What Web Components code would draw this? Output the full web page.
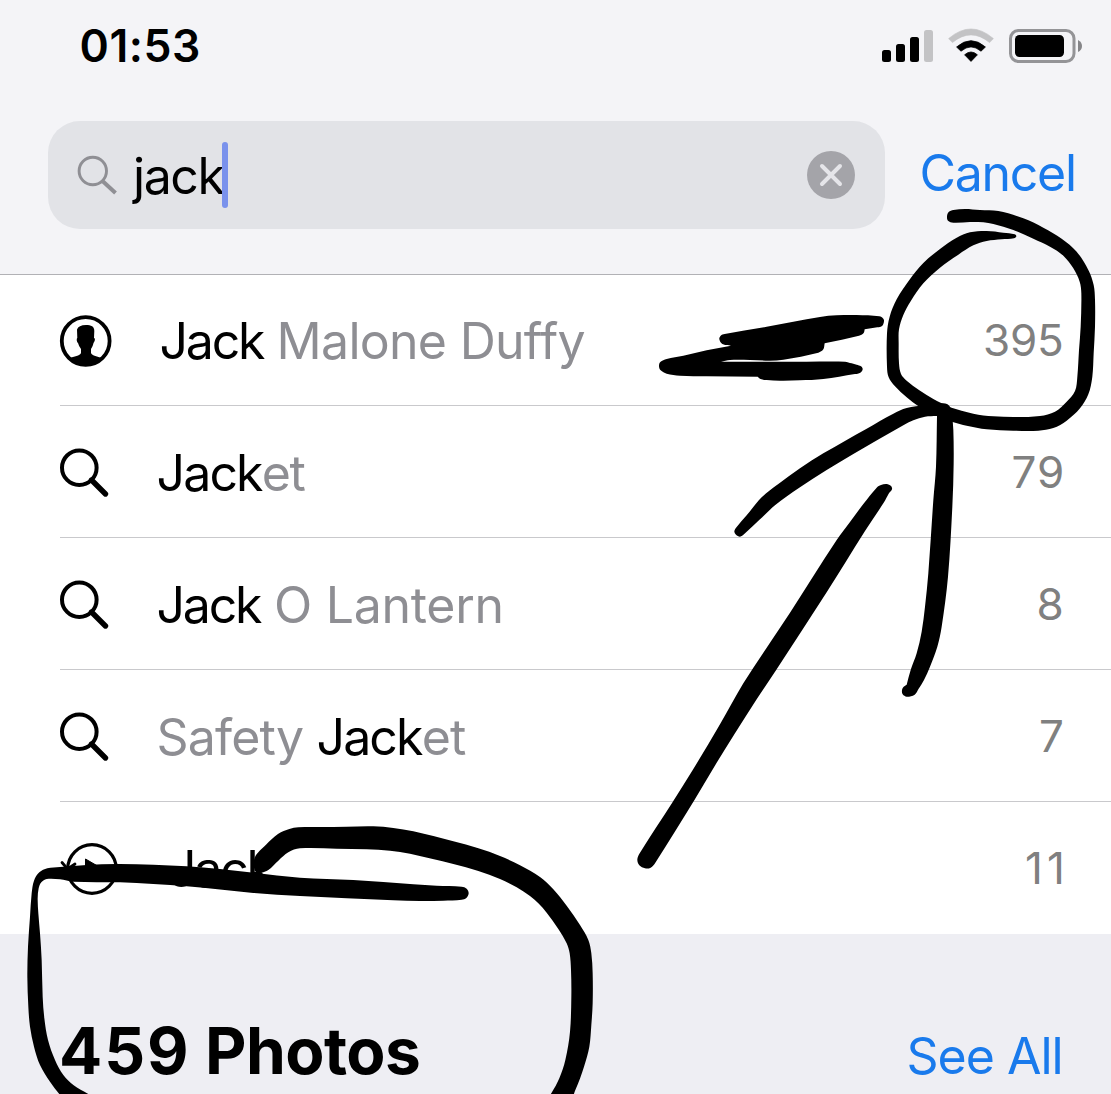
<!DOCTYPE html>
<html lang="en">
<head>
<meta charset="utf-8">
<title>Photo search</title>
<style>
html,body{margin:0;padding:0}
body{font-family:Inter,"Liberation Sans",sans-serif;background:#fff;width:1111px;height:1094px;overflow:hidden}
</style>
</head>
<body>
<photo-search></photo-search>
<script>
const define = (name, html, setup) => {
  const t = document.createElement('template');
  t.innerHTML = html;
  customElements.define(name, class extends HTMLElement {
    constructor() {
      super();
      this.attachShadow({mode: 'open'}).append(t.content.cloneNode(true));
    }
    connectedCallback() { if (setup) setup(this, this.shadowRoot); }
  });
};

/* A line of text whose drawn width equals its w attribute.
   A <b w> inside it is fitted to its own width first. */
const ctx = document.createElement('canvas').getContext('2d');
define('fit-text', `<style>:host{display:block;white-space:pre;flex:none;line-height:60px}span{display:inline-block;vertical-align:top}</style><span><slot></slot></span>`,
  (el, root) => {
    const cs = getComputedStyle(el), text = el.textContent;
    const bearings = s => {
      ctx.font = `${cs.fontWeight} ${cs.fontSize} Inter, sans-serif`;
      const m = ctx.measureText(s);
      return [-m.actualBoundingBoxLeft, m.width - m.actualBoundingBoxRight];
    };
    const span = root.querySelector('span'), b = el.querySelector('b[w]');
    let loose = text.length - 1;
    if (b) {
      const s = b.textContent, [l, r] = bearings(s);
      b.style.letterSpacing = (+b.getAttribute('w') + l + r - b.getBoundingClientRect().width) / (s.length - 1) + 'px';
      loose -= s.length;
    }
    const w = +el.getAttribute('w'), [left, right] = bearings(text);
    const ink = span.getBoundingClientRect().width - left - right;
    el.style.width = w + 'px';
    span.style.marginLeft = -left + 'px';
    if (loose > 0) span.style.letterSpacing = (w - ink) / loose + 'px';
  });

define('status-bar', `<style>
:host{display:flex;align-items:center;height:92px;padding:0 28px 0 81.500px;box-sizing:border-box}
fit-text{font-size:44.5px;font-weight:600;margin-right:auto}
svg{display:block}
</style>
<fit-text w="117.500">01:53</fit-text>
<svg width="204" height="40" viewBox="879 26 204 40">
<rect x="882" y="50" width="9" height="12" rx="2.5"/><rect x="896" y="44" width="9" height="18" rx="2.5"/><rect x="910" y="37" width="9" height="25" rx="2.5"/><rect x="924" y="30" width="9" height="32" rx="2.5" fill="#c3c3c5"/>
<path d="M948.6 38.6Q971 19.3 993.4 38.6L989.6 42.6Q971 27.2 952.4 42.6Z" fill="#c3c3c5" stroke="#c3c3c5" stroke-width=".6" stroke-linejoin="round"/>
<path d="M956.6 47Q971 34.3 985.4 47L981 51.2Q971 42.6 961 51.2Z" stroke="#000" stroke-width=".8" stroke-linejoin="round"/>
<path d="M964.6 54.8Q971 49.2 977.4 54.8L971 61.4Z" stroke="#000" stroke-width=".8" stroke-linejoin="round"/>
<rect x="1010.5" y="30.5" width="63.500" height="31" rx="8" fill="none" stroke="#949497" stroke-width="3"/>
<rect x="1015" y="35" width="49" height="22" rx="4.500"/>
<path d="M1078 40Q1082 42 1082 46T1078 52Z" fill="#858588"/>
</svg>`);

define('search-field', `<style>
:host{display:flex;align-items:center;width:837px;height:108px;border-radius:32px;background:#e2e3e7;box-sizing:border-box;padding:0 30px 0 29px}
fit-text{font-size:50px;margin:2px 0 0 14px}
i{width:6px;height:66px;border-radius:3px;background:#7a92ec;margin-left:-2.500px}
.clear{margin-left:auto}
svg{display:block}
</style>
<svg width="41" height="44" viewBox="77 153 41 44" fill="none" stroke="#8f8f94"><circle cx="92.800" cy="171" r="13.700" stroke-width="2.900"/><path d="M102.500 181L115.500 193" stroke-width="4"/></svg>
<fit-text w="92.500">jack</fit-text><i></i>
<svg class="clear" width="48" height="48" viewBox="0 0 48 48"><circle cx="24" cy="24" r="24" fill="#a4a4a9"/><path d="M15 15L33 33M33 15L15 33" stroke="#e5e5e9" stroke-width="4" stroke-linecap="round"/></svg>`);

define('search-header', `<style>
:host{display:flex;flex-direction:column;height:275px;box-sizing:border-box;background:#f4f4f7;border-bottom:1px solid #b1b1b5}
div{display:flex;align-items:center;margin-top:29px;padding:0 37px 0 48px;justify-content:space-between}
div>fit-text{font-size:50px;color:#197aec;margin-top:-5px}
</style>
<status-bar></status-bar>
<div><search-field></search-field><fit-text w="152.500">Cancel</fit-text></div>`);

const icons = {
  search: '<circle cx="19.300" cy="23.700" r="17.300" fill="none" stroke="#000" stroke-width="4"/><path d="M31.500 36L45.500 50" stroke="#000" stroke-width="5.400" stroke-linecap="round"/>',
  person: '<circle cx="25.700" cy="29" r="23.900" fill="none" stroke="#000" stroke-width="3.800"/><path d="M17 17.500C18 14.500 21 13 26 13C31 13 34.500 14.500 34.300 19L34 26C35.500 26 35 29.500 33.500 31C33 34 31.500 36 31 37V41C32 44 38 44.500 41.500 46C37 52 32 54 25.700 54S14 52 9.500 46C14 44.500 20 44 21 41V37C19.500 35 18.500 33 18 31C16.500 30 16.500 26.500 17.300 26Z"/>',
  play: '<circle cx="32" cy="29" r="24.300" fill="none" stroke="#000" stroke-width="3.200"/><path d="M25.500 19L41 28L25.500 37Z" stroke="#000" stroke-linejoin="round"/><path d="M2 22.500L7.500 29L15 24" fill="none" stroke="#000" stroke-width="2.800" stroke-linecap="round"/>'
};
define('result-row', `<style>
:host{display:flex;align-items:center;height:132px;margin-left:60px;padding-right:49px;box-sizing:border-box;border-bottom:1px solid #c9c9cc}
:host([first]){height:131px}
:host([last]){border:0}
svg{display:block;flex:none;overflow:visible;margin-top:-2px}
.name{font-size:50px;color:#8e8e93;flex:1;padding-top:2.500px}
.count{font-size:44px;color:#808080}
</style>
<svg width="60" height="54"></svg>
<div class="name"><slot></slot></div>
<div class="count"><slot name="count"></slot></div>`,
  (el, root) => {
    const svg = root.querySelector('svg');
    svg.innerHTML = icons[el.getAttribute('icon')];
    root.querySelector('.name').style.paddingLeft = el.getAttribute('indent') - 60 + 'px';
  });

define('photos-heading', `<style>
:host{display:flex;align-items:flex-end;justify-content:space-between;height:160px;box-sizing:border-box;background:#eeeef3;padding:0 50.500px 0 62px}
fit-text{line-height:80px}
b{font-weight:inherit}
.title{font-size:64px;font-weight:700;margin-bottom:3px}
.all{font-size:50px;color:#197aec;margin-bottom:-2px}
</style>
<fit-text class="title" w="357"><b w="124">459</b> Photos</fit-text><fit-text class="all" w="152">See All</fit-text>`);

/* Pen strokes: outline points in thirds of a pixel from an origin, joined by a smooth closed curve.
   A point given twice is a sharp corner. */
const strokes = [
  [640, 200, `940 30 975 27 1020 30 1075 33 1150 55 1210 83 1265 116 1310 155 1345 210 1361 255 1365 300 1365 380 1361 460 1357 530 1345 583 1320 625 1280 662 1240 684 1195 692 1120 692 1040 688 980 677 938 666 890 645 838 620 800 592 765 559 746 532 741 500 741 400 749 350 770 298 808 240 850 189 900 147 950 113 990 97 1040 93 1090 98 1124 103 1129 109 1122 115 1085 118 1040 123 1000 136 955 164 900 203 850 250 812 304 790 345 777 388 776 430 777 490 783 522 800 542 838 571 880 597 905 610 930 622 1000 641 1060 649 1130 651 1200 648 1245 635 1280 605 1305 573 1312 530 1317 450 1322 380 1324 280 1319 245 1300 205 1270 167 1230 140 1180 116 1120 90 1060 72 1030 67 990 66 940 68 924 62 921 49 926 36`],
  [640, 200, `254 402 380 380 540 351 590 346 650 345 718 349 730 356 732 364 727 377 712 382 674 388 674 388 671 399 657 407 554 430 554 430 550 448 535 458 430 479 390 482 330 480 270 480 243 485 243 485 300 485 500 485 615 485 635 490 650 494 663 499 668 508 661 518 645 522 550 537 480 541 420 542 380 540 362 537 353 530 353 530 200 529 120 527 80 521 62 511 57 499 61 486 80 477 130 467 200 451 273 437 273 437 247 432 238 418 242 407`],
  [620, 390, `965 40 981 42 992 54 996 75 1000 120 1001 220 997 350 984 560 965 710 952 770 930 830 912 870 895 898 884 914 860 920 848 913 846 900 851 890 860 884 860 884 872 840 890 790 905 725 915 650 925 550 940 330 948 230 951 78 951 78 915 80 880 91 850 106 700 192 620 240 540 292 465 346 420 388 372 433 360 440 348 434 343 424 350 411 380 376 425 322 475 282 540 235 610 190 740 116 820 71 860 54 915 46`],
  [620, 390, `770 293 783 285 800 282 813 288 816 298 806 311 792 337 735 423 620 607 470 838 410 928 345 1030 290 1118 222 1232 106 1418 92 1433 75 1435 58 1426 52 1408 60 1388 158 1236 220 1137 300 1003 370 880 450 758 510 668 650 450 690 396 730 342`],
  [20, 810, `1325 230 1340 236 1346 250 1339 264 1325 269 1270 272 1200 273 1120 271 840 258 700 249 500 229 400 222 300 217 160 215 120 208 80 207 64 217 56 235 53 265 55 310 60 370 65 450 68 560 73 625 84 690 105 750 130 795 160 825 208 854 280 900 190 920 125 860 90 815 60 765 42 710 30 650 25 590 22 500 24 410 30 320 35 250 42 212 58 187 82 175 120 171 200 165 290 162 400 164 500 169 600 177 840 203 1000 210 1180 223 1250 227`],
  [20, 810, `704 143 738 104 775 71 808 57 835 52 900 51 980 50 1060 49 1120 54 1180 64 1300 94 1375 115 1440 138 1500 166 1560 201 1600 238 1640 287 1680 345 1705 390 1714 430 1718 490 1718 580 1714 645 1708 710 1692 770 1667 838 1630 910 1560 900 1594 850 1618 805 1636 750 1650 665 1654 560 1653 480 1649 430 1640 400 1615 357 1580 308 1555 280 1530 258 1490 232 1440 207 1375 183 1300 162 1170 131 1110 122 1040 118 950 116 840 115 805 127 775 152 745 180 722 188 705 182`]
];
const smooth = (x0, y0, list) => {
  const n = list.split(' ').map(Number), p = [];
  for (let i = 0; i < n.length; i += 2) p.push([x0 + n[i] / 3, y0 + n[i + 1] / 3]);
  const at = i => p[(i + p.length) % p.length];
  let d = 'M' + p[0];
  p.forEach((b, i) => {
    const a = at(i - 1), c = at(i + 1), e = at(i + 2);
    const len = Math.hypot(c[0] - b[0], c[1] - b[1]);
    const handle = (s, t) => { const l = Math.hypot(t[0] - s[0], t[1] - s[1]) || 1; return [(t[0] - s[0]) / l * len / 3, (t[1] - s[1]) / l * len / 3]; };
    const h = handle(a, c), k = handle(b, e);
    d += `C${b[0] + h[0]} ${b[1] + h[1]} ${c[0] - k[0]} ${c[1] - k[1]} ${c[0]} ${c[1]}`;
  });
  return d + 'Z';
};
define('pen-markup', `<style>:host{display:block;position:absolute;inset:0;pointer-events:none}svg{display:block}</style>
<svg width="1111" height="1094" viewBox="0 0 1111 1094"></svg>`,
  (el, root) => {
    root.querySelector('svg').innerHTML = strokes.map(s => `<path d="${smooth(...s)}"/>`).join('');
  });

define('photo-search', `<style>
:host{display:flex;flex-direction:column;position:relative;width:1111px;height:1094px;overflow:hidden;background:#fff}
b{font-weight:400;color:#000}
</style>
<search-header></search-header>
<result-row first icon="person" indent="101.500"><fit-text w="423"><b w="103.500">Jack</b> Malone Duffy</fit-text><fit-text slot="count" w="77">395</fit-text></result-row>
<result-row icon="search" indent="98.500"><fit-text w="147"><b w="103.500">Jack</b>et</fit-text><fit-text slot="count" w="48.500">79</fit-text></result-row>
<result-row icon="search" indent="98.500"><fit-text w="342"><b w="103.500">Jack</b> O Lantern</fit-text><fit-text slot="count" w="23.500">8</fit-text></result-row>
<result-row icon="search" indent="98.500"><fit-text w="307.500">Safety <b w="103.500">Jack</b>et</fit-text><fit-text slot="count" w="21">7</fit-text></result-row>
<result-row last icon="play" indent="110"><fit-text w="103.500"><b>Jack</b></fit-text><fit-text slot="count" w="35">11</fit-text></result-row>
<photos-heading></photos-heading>
<pen-markup></pen-markup>`);
</script>
</body>
</html>
